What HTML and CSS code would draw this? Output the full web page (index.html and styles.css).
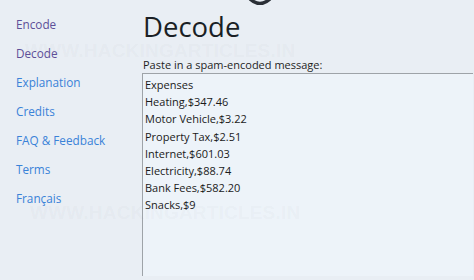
FILE: index.html
```html
<!DOCTYPE html>
<html lang="en">
<head>
<meta charset="utf-8">
<title>Decode</title>
<link rel="stylesheet" href="styles.css">
</head>
<body>
<div class="page">
  <nav class="sidebar">
    <a class="nav-link visited" href="#">Encode</a>
    <a class="nav-link visited" href="#">Decode</a>
    <a class="nav-link" href="#">Explanation</a>
    <a class="nav-link" href="#">Credits</a>
    <a class="nav-link" href="#">FAQ &amp; Feedback</a>
    <a class="nav-link" href="#">Terms</a>
    <a class="nav-link" href="#">Français</a>
  </nav>
  <main class="main">
    <h1 class="title">Decode</h1>
    <label class="label" for="msg">Paste in a spam-encoded message:</label>
    <textarea class="message" id="msg">Expenses
Heating,$347.46
Motor Vehicle,$3.22
Property Tax,$2.51
Internet,$601.03
Electricity,$88.74
Bank Fees,$582.20
Snacks,$9</textarea>
  </main>
</div>
<svg class="logo-tail" width="24" height="6" viewBox="0 0 24 6"><path d="M2 0 Q12 9 22 0" fill="none" stroke="#2a2f36" stroke-width="3.5"/></svg>
<div class="watermark wm1">WWW.HACKINGARTICLES.IN</div>
<div class="watermark wm2">WWW.HACKINGARTICLES.IN</div>
</body>
</html>
```
FILE: styles.css
```css
html, body {
  margin: 0;
  padding: 0;
  height: 100%;
  overflow: hidden;
}
body {
  background: #e9eef4;
  font-family: "Open Sans", "Noto Sans", sans-serif;
  color: #1a1a1a;
}
.page {
  display: flex;
  height: 280px;
}
.sidebar {
  width: 142px;
  flex: none;
  display: flex;
  flex-direction: column;
  gap: 11px;
  padding: 15px 0 0 16px;
  box-sizing: border-box;
}
.nav-link {
  font-size: 11.75px;
  line-height: 18px;
  color: #3a82d8;
  text-decoration: none;
}
.nav-link.visited {
  color: #5d4f98;
}
.main {
  flex: 1;
  display: flex;
  flex-direction: column;
  min-width: 0;
}
.title {
  margin: 10px 0 0 1px;
  font-size: 27.5px;
  line-height: 34px;
  font-weight: 400;
  color: #1a1f25;
}
.label {
  margin: 13px 0 0 1px;
  font-size: 11px;
  line-height: 15px;
  color: #1e1e1e;
}
.message {
  margin-top: 1px;
  height: 203px;
  width: 331px;
  box-sizing: border-box;
  border: 1px solid #9ea3a8;
  border-width: 1px 0 0 1px;
  background: #edf3f9;
  font-family: inherit;
  font-size: 11px;
  line-height: 17.2px;
  color: #1a1a1a;
  padding: 2px 0 0 2px;
  resize: none;
  outline: none;
}
.logo-tail {
  position: absolute;
  left: 248px;
  top: -1px;
}
.watermark {
  position: absolute;
  font-family: "Liberation Sans", Arial, sans-serif;
  font-weight: bold;
  font-size: 19px;
  line-height: 20px;
  letter-spacing: 0.2px;
  color: rgba(120, 130, 145, 0.055);
  pointer-events: none;
  white-space: nowrap;
}
.wm1 { left: 25px; top: 41px; }
.wm2 { left: 30px; top: 203px; }
```
